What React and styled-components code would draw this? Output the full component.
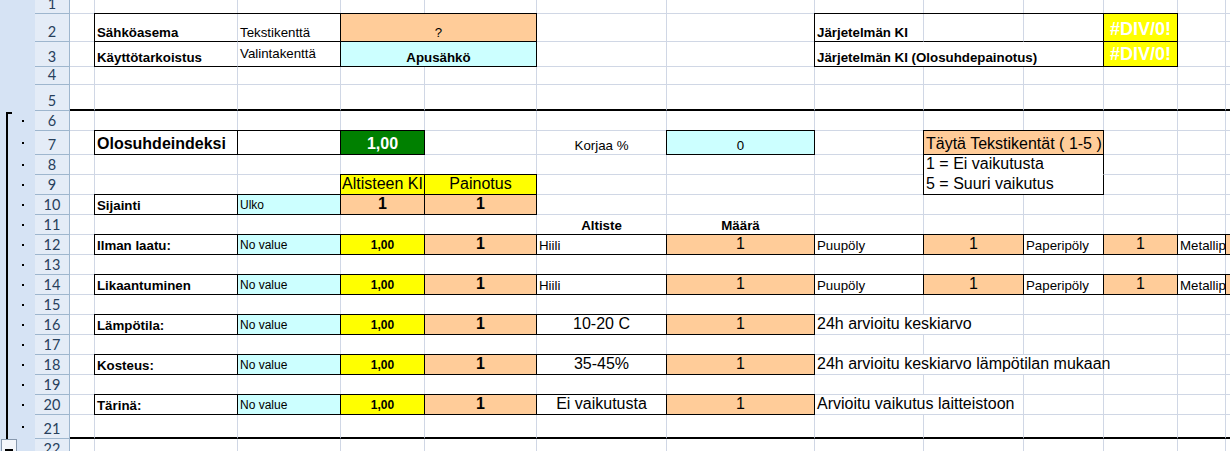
import React from 'react';
import styled, { createGlobalStyle } from 'styled-components';

const GRID = '#d0d7e5';
const ORANGE = '#ffcc99';
const CYAN = '#ccffff';
const YELLOW = '#ffff00';
const GREEN = '#008000';
const COLS = 'A B C D E F G H I J K L M'.split(' ');

const Global = createGlobalStyle`
  html, body { margin: 0; padding: 0; background: #fff; }
  body { overflow: hidden; }
`;

const Sheet = styled.div`
  display: grid;
  grid-template-columns: 35px 35px 25px 143px 103px 84px 112px 130px 148px 109px 100px 80px 74px 48px 80px;
  grid-template-rows: 14px 28px 25px 18px 26px 20px 24px repeat(13, 20px) 24px 20px;
  width: 1230px;
  height: 451px;
  overflow: hidden;
  font-family: "Liberation Sans", Arial, sans-serif;
  color: #000;
`;

const Outline = styled.div`
  background: #d6e3f4;
  display: flex;
  align-items: stretch;
  padding-left: ${p => (p.$button ? '1px' : '6px')};
  box-sizing: border-box;
`;

const Bracket = styled.div`
  width: 6px;
  box-sizing: border-box;
  border-left: 2px solid #000;
  border-top: ${p => (p.$first ? '2px solid #000' : 'none')};
  margin-top: ${p => (p.$first ? '1px' : '0')};
`;

const Dot = styled.div`
  width: 2px;
  height: 2px;
  background: #000;
  align-self: center;
  margin-left: 10px;
`;

const MinusButton = styled.div`
  width: 16px;
  height: 16px;
  box-sizing: border-box;
  border: 1px solid #8798ad;
  background: #f3f6fb;
  display: flex;
  justify-content: center;
  align-items: flex-start;
  padding-top: 9px;
  &::after {
    content: '';
    width: 8px;
    height: 2px;
    background: #000;
  }
`;

const RowHead = styled.div`
  background: #e4ecf7;
  border-right: 1px solid #9eb6ce;
  border-bottom: 1px solid #9eb6ce;
  box-sizing: border-box;
  display: flex;
  align-items: flex-end;
  justify-content: center;
  overflow: hidden;
  font-family: Lato, "Open Sans", sans-serif;
  font-size: 14.5px;
  line-height: 15px;
  padding-bottom: 2px;
  color: #27405c;
`;

const edge = v => (v === true ? '#000' : v || GRID);
const shadow = (t, l) => {
  const s = [];
  if (t) s.push('0 -1px 0 #000');
  if (l) s.push('-1px 0 0 #000');
  if (t && l) s.push('-1px -1px 0 #000');
  return s.length ? s.join(', ') : 'none';
};
const JUSTIFY = { left: 'flex-start', center: 'center', right: 'flex-end' };

const Cell = styled.div`
  grid-column: span ${p => p.$span || 1};
  box-sizing: border-box;
  min-width: 0;
  overflow: ${p => (p.$spill ? 'visible' : 'hidden')};
  white-space: nowrap;
  display: flex;
  align-items: ${p => p.$valign || 'flex-end'};
  justify-content: ${p => JUSTIFY[p.$align || 'left']};
  padding: ${p => (p.$align === 'center' ? '0 0 1px 0' : '0 2px 1px 2px')};
  background: ${p => p.$bg || 'transparent'};
  border-right: 1px solid ${p => edge(p.$r ?? p.$box)};
  border-bottom: ${p => (p.$thick ? '2px solid #000' : `1px solid ${edge(p.$b ?? p.$box)}`)};
  box-shadow: ${p => shadow(p.$t ?? p.$box, p.$l ?? p.$box)};
  font-size: ${p => p.$size || 13.3}px;
  font-weight: ${p => (p.$bold ? 700 : 400)};
  color: ${p => p.$color || '#000'};
  line-height: 1.15;
`;

const K = true;

const measureRow = (label, exp) => [
  { col: 'B', box: K, bold: K, text: label },
  { col: 'C', box: K, bg: CYAN, size: 12, text: 'No value' },
  { col: 'D', box: K, bg: YELLOW, bold: K, size: 12, align: 'center', text: '1,00' },
  { col: 'E', box: K, bg: ORANGE, bold: K, size: 16, align: 'center', text: '1' },
  ...exp,
];

const dustRow = label =>
  measureRow(label, [
    { col: 'F', box: K, text: 'Hiili' },
    { col: 'G', box: K, bg: ORANGE, size: 16, align: 'center', text: '1' },
    { col: 'H', box: K, text: 'Puupöly' },
    { col: 'I', box: K, bg: ORANGE, size: 16, align: 'center', text: '1' },
    { col: 'J', box: K, text: 'Paperipöly' },
    { col: 'K', box: K, bg: ORANGE, size: 16, align: 'center', text: '1' },
    { col: 'L', box: K, text: 'Metallipöly' },
    { col: 'M', box: K, bg: ORANGE, size: 16, align: 'center', text: '1' },
  ]);

const noteRow = (label, value, note, span) =>
  measureRow(label, [
    { col: 'F', box: K, size: 16, align: 'center', text: value },
    { col: 'G', box: K, bg: ORANGE, size: 16, align: 'center', text: '1' },
    { col: 'H', span, size: 16, text: note },
  ]);

const ROWS = [
  { n: 1, cells: [] },
  {
    n: 2,
    cells: [
      { col: 'B', t: K, l: K, b: K, bold: K, text: 'Sähköasema' },
      { col: 'C', t: K, b: K, text: 'Tekstikenttä' },
      { col: 'D', span: 2, box: K, bg: ORANGE, align: 'center', text: '?' },
      { col: 'H', t: K, l: K, b: K, bold: K, spill: K, text: 'Järjetelmän KI' },
      { col: 'I', t: K, b: K },
      { col: 'J', t: K, b: K },
      { col: 'K', box: K, bg: YELLOW, color: '#fff', bold: K, size: 18, align: 'center', text: '#DIV/0!' },
    ],
  },
  {
    n: 3,
    cells: [
      { col: 'B', l: K, b: K, bold: K, text: 'Käyttötarkoistus' },
      { col: 'C', b: K, valign: 'center', text: 'Valintakenttä' },
      { col: 'D', span: 2, box: K, bg: CYAN, bold: K, align: 'center', text: 'Apusähkö' },
      { col: 'H', span: 3, l: K, b: K, bold: K, text: 'Järjetelmän KI (Olosuhdepainotus)' },
      { col: 'K', box: K, bg: YELLOW, color: '#fff', bold: K, size: 18, align: 'center', text: '#DIV/0!' },
    ],
  },
  { n: 4, cells: [] },
  { n: 5, thick: true, cells: [] },
  { n: 6, cells: [] },
  {
    n: 7,
    cells: [
      { col: 'B', box: K, bold: K, size: 16, text: 'Olosuhdeindeksi' },
      { col: 'C', box: K },
      { col: 'D', box: K, bg: GREEN, color: '#fff', bold: K, size: 16, align: 'center', text: '1,00' },
      { col: 'F', align: 'center', text: 'Korjaa %' },
      { col: 'G', box: K, bg: CYAN, align: 'center', text: '0' },
      { col: 'I', span: 2, box: K, bg: ORANGE, size: 16, text: 'Täytä Tekstikentät ( 1-5 )' },
    ],
  },
  {
    n: 8,
    cells: [{ col: 'I', span: 2, l: K, r: K, b: '#fff', size: 16, text: '1 = Ei vaikutusta' }],
  },
  {
    n: 9,
    cells: [
      { col: 'D', box: K, bg: YELLOW, size: 16, align: 'center', text: 'Altisteen KI' },
      { col: 'E', box: K, bg: YELLOW, size: 16, align: 'center', text: 'Painotus' },
      { col: 'I', span: 2, l: K, r: K, b: K, size: 16, text: '5 = Suuri vaikutus' },
    ],
  },
  {
    n: 10,
    cells: [
      { col: 'B', box: K, bold: K, text: 'Sijainti' },
      { col: 'C', box: K, bg: CYAN, size: 12, text: 'Ulko' },
      { col: 'D', box: K, bg: ORANGE, bold: K, size: 16, align: 'center', text: '1' },
      { col: 'E', box: K, bg: ORANGE, bold: K, size: 16, align: 'center', text: '1' },
    ],
  },
  {
    n: 11,
    cells: [
      { col: 'F', bold: K, align: 'center', text: 'Altiste' },
      { col: 'G', bold: K, align: 'center', text: 'Määrä' },
    ],
  },
  { n: 12, cells: dustRow('Ilman laatu:') },
  { n: 13, cells: [] },
  { n: 14, cells: dustRow('Likaantuminen') },
  { n: 15, cells: [] },
  { n: 16, cells: noteRow('Lämpötila:', '10-20 C', '24h arvioitu keskiarvo', 2) },
  { n: 17, cells: [] },
  { n: 18, cells: noteRow('Kosteus:', '35-45%', '24h arvioitu keskiarvo lämpötilan mukaan', 3) },
  { n: 19, cells: [] },
  { n: 20, cells: noteRow('Tärinä:', 'Ei vaikutusta', 'Arvioitu vaikutus laitteistoon', 2) },
  { n: 21, thick: true, cells: [] },
  { n: 22, cells: [] },
];

function OutlineCell({ n }) {
  if (n === 22) {
    return (
      <Outline $button>
        <MinusButton />
      </Outline>
    );
  }
  if (n >= 6 && n <= 21) {
    return (
      <Outline>
        <Bracket $first={n === 6} />
        <Dot />
      </Outline>
    );
  }
  return <Outline />;
}

function SheetRow({ row }) {
  const byCol = Object.fromEntries(row.cells.map(c => [c.col, c]));
  const items = [];
  for (let i = 0; i < COLS.length; ) {
    const c = byCol[COLS[i]];
    if (c) {
      items.push(
        <Cell
          key={COLS[i]}
          $span={c.span}
          $box={c.box}
          $t={c.t}
          $l={c.l}
          $r={c.r}
          $b={c.b}
          $bg={c.bg}
          $bold={c.bold}
          $size={c.size}
          $color={c.color}
          $align={c.align}
          $valign={c.valign}
          $spill={c.spill || (!!c.span && !c.box && !c.bg)}
          $thick={row.thick}
        >
          {c.text}
        </Cell>
      );
      i += c.span || 1;
    } else {
      items.push(<Cell key={COLS[i]} $thick={row.thick} />);
      i += 1;
    }
  }
  return (
    <>
      <OutlineCell n={row.n} />
      <RowHead>{row.n}</RowHead>
      {items}
    </>
  );
}

export default function App() {
  return (
    <>
      <Global />
      <Sheet>
        {ROWS.map(r => (
          <SheetRow key={r.n} row={r} />
        ))}
      </Sheet>
    </>
  );
}
